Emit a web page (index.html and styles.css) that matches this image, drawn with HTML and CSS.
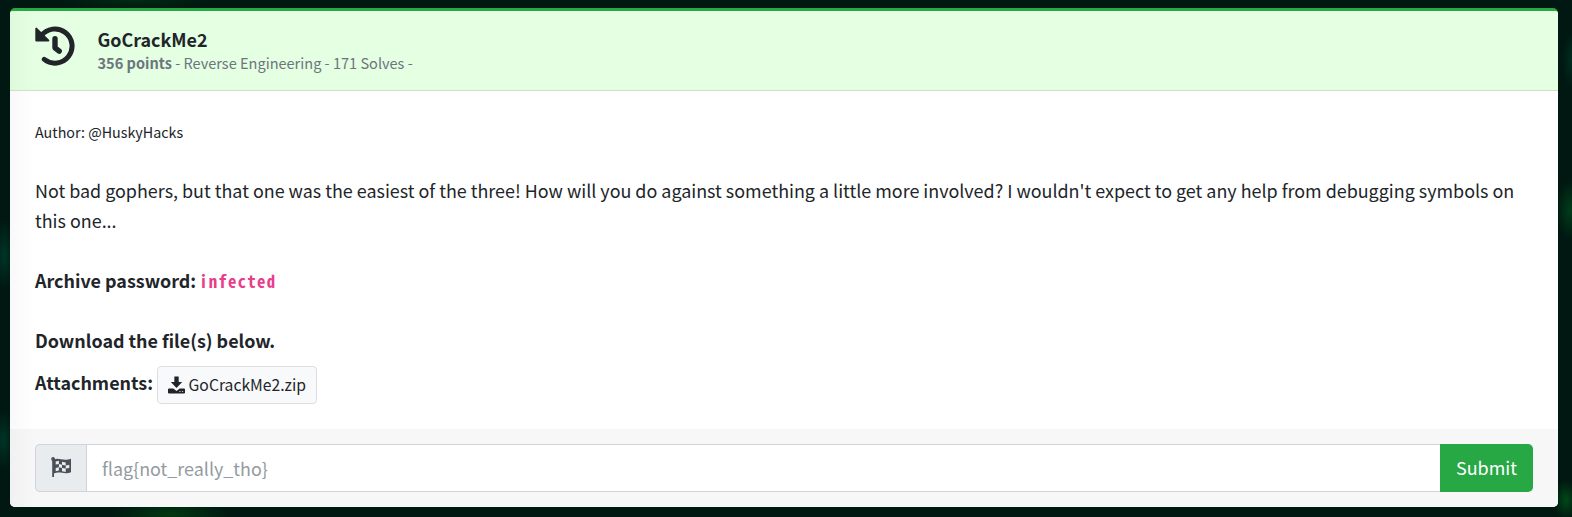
FILE: index.html
```html
<!DOCTYPE html>
<html lang="en">
<head>
<meta charset="utf-8">
<title>GoCrackMe2</title>
<link rel="stylesheet" href="styles.css">
</head>
<body>
<main class="card">
  <header class="card-header">
    <svg class="history" viewBox="0 0 40 40" fill="none" stroke="#212529" stroke-width="5" stroke-linecap="round" stroke-linejoin="round">
      <path d="M6.2 9.9A17.1 17.1 0 1 1 9.3 33.4"/>
      <path d="M20 12.8V21.8L24.2 25.2" stroke-width="5.4"/>
      <path d="M1.3 2.6V14.4H13.3Z" fill="#212529" stroke-width="2"/>
    </svg>
    <div class="heading">
      <h1 class="title">GoCrackMe2</h1>
      <p class="meta"><b>356 points</b> - Reverse Engineering - 171 Solves -</p>
    </div>
  </header>
  <section class="card-body">
    <p class="author">Author: @HuskyHacks</p>
    <p class="text">Not bad gophers, but that one was the easiest of the three! How will you do against something a little more involved? I wouldn't expect to get any help from debugging symbols on<br>this one...</p>
    <p class="text strong">Archive password: <code class="code">infected</code></p>
    <p class="text strong last">Download the file(s) below.</p>
    <div class="attachments">
      <span class="strong label">Attachments:</span>
      <a class="file">
        <svg class="download" viewBox="0 0 18 18" fill="#212529"><path d="M6.7 0h4.6v5.8h3.7L9 12.2 3 5.8h3.7z"/><path fill-rule="evenodd" d="M.8 12.8H5.6L9 15.400l3.400-2.600h4.800l.8.8V17.200l-.8.8H.8L0 17.200V13.600zM12 15.500v1h1.300v-1zM14.700 15.500v1h1.300v-1z"/></svg>
        <span>GoCrackMe2.zip</span>
      </a>
    </div>
  </section>
  <footer class="card-footer">
    <span class="addon">
      <svg class="flag" viewBox="0 0 20 20" fill="#495057"><path d="M1.2 2h1.800v18h-1.800z"/><circle cx="2.1" cy="2" r="1.9"/><path fill-rule="evenodd" d="M3 2.600C8 .2 11.500 4.600 20 1.800V15.200C13 18 9.500 13.800 3 16.500Z M4.700 4.400v3.200l3.200-.6v-3.200z M11 4.700v3l3.700.7v-3z M7.900 7v3.300l3.100.6V7.700z M14.700 8.400v3.200l3.600-.6V7.800z M4.700 10.900v3.400l3.200-.7v-3.300z M11 10.900v3.300l3.700.8v-3.400z"/></svg>
    </span>
    <input class="field" type="text" placeholder="flag{not_really_tho}">
    <button class="submit">Submit</button>
  </footer>
</main>
</body>
</html>
```
FILE: styles.css
```css
* { box-sizing: border-box; }
body {
  margin: 0;
  height: 517px;
  overflow: hidden;
  padding: 8px 14px 10px 10px;
  color: #212529;
  font-family: "Noto Sans CJK SC", sans-serif;
  font-size: 17.91px;
  line-height: 30px;
  background:
    radial-gradient(ellipse 12px 20px at 1566px 500px, #004818, transparent),
    radial-gradient(ellipse 14px 30px at 1570px 210px, #003c1a, transparent),
    radial-gradient(ellipse 10px 30px at 1572px 60px, #002c20, transparent),
    radial-gradient(ellipse 12px 35px at 4px 255px, #003426, transparent),
    radial-gradient(ellipse 12px 30px at 3px 440px, #003426, transparent),
    radial-gradient(ellipse 60px 12px at 170px 514px, #003a10, transparent),
    radial-gradient(ellipse 80px 10px at 135px 0, #002a10, transparent),
    #001811;
}
h1, p { margin: 0; }
.card {
  display: flex;
  flex-direction: column;
  height: 499px;
  border-top: 3px solid #28a745;
  border-radius: 5px;
  overflow: hidden;
  background: linear-gradient(90deg, #f9f9f9, #fff 25px);
}
.card-header {
  display: flex;
  gap: 22.5px;
  height: 80px;
  padding: 15px 25px 0;
  border-bottom: 1px solid #c9e2c9;
  background: linear-gradient(90deg, #dff9dd, #e4ffe2 25px);
}
.history { width: 40px; height: 40px; }
.heading { padding-top: 1px; }
.title { font-size: 17.9px; line-height: 24px; font-weight: 700; }
.meta { padding-top: 1px; font-size: 14.56px; line-height: 22px; color: #6c757d; }
.card-body { flex: 1; padding: 26px 25px 0; }
.author { font-size: 14.3px; margin-bottom: 28px; }
.text { margin-bottom: 30px; white-space: nowrap; }
.last { margin-bottom: 11px; }
.strong { font-weight: 700; }
.code {
  margin-left: -1px;
  font: 700 16.8px/20px "Noto Sans Mono CJK SC", "Liberation Mono", monospace;
  letter-spacing: 1.25px;
  color: #e83e8c;
}
.attachments { display: flex; gap: 4px; }
.label { padding-top: 1px; }
.file {
  display: flex;
  align-items: center;
  gap: 3.5px;
  width: 160px;
  height: 38px;
  padding: 0 10px;
  border: 1px solid #dcdfe2;
  border-radius: 4px;
  background: #f8f9fa;
  font-size: 15.7px;
}
.download { width: 18px; height: 18px; }
.card-footer {
  display: flex;
  height: 78px;
  padding: 15px 25px;
  background: linear-gradient(90deg, #f1f1f1, #f7f7f7 25px);
}
.addon {
  width: 51px;
  padding: 12px 0 0 15px;
  border: 1px solid #ced4da;
  border-right: 0;
  border-radius: 5px 0 0 5px;
  background: #e9ecef;
  line-height: 0;
}
.flag { width: 20px; height: 20px; }
.field {
  flex: 1;
  padding: 0 15px;
  border: 1px solid #ced4da;
  border-right: 0;
  background: #fff;
  font: inherit;
}
.field::placeholder { color: #939ba0; }
.submit {
  width: 93px;
  padding: 0 0 2px;
  border: 0;
  border-radius: 0 5px 5px 0;
  background: #28a745;
  color: #fff;
  font: inherit;
}
```
